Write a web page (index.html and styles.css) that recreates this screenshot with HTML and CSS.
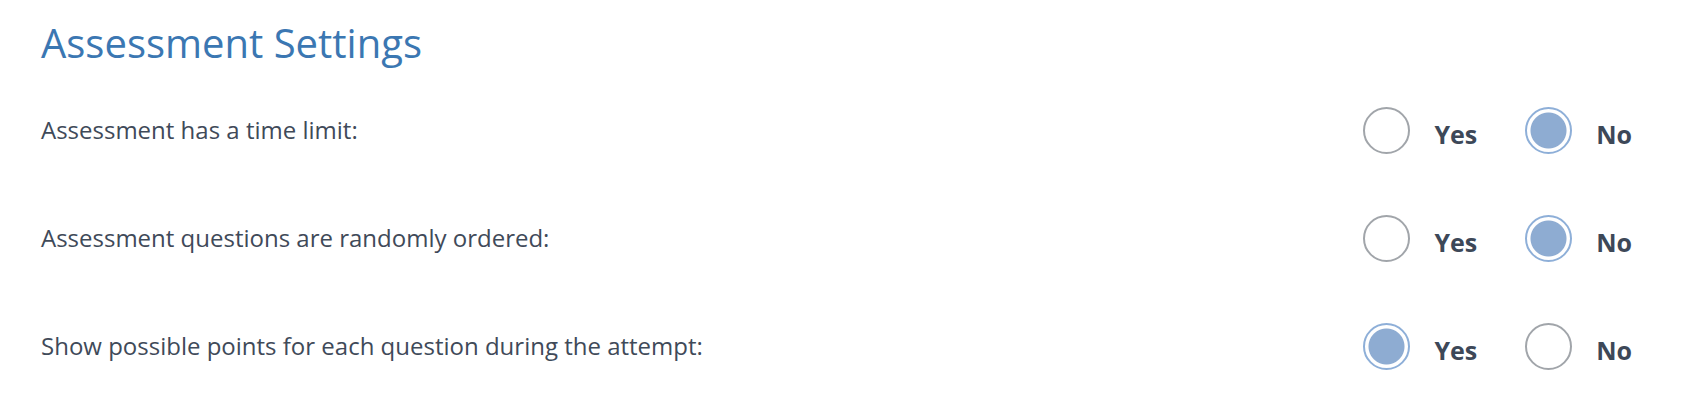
FILE: index.html
```html
<!DOCTYPE html>
<html lang="en">
<head>
    <meta charset="UTF-8">
    <meta name="viewport" content="width=device-width, initial-scale=1.0">
    <title>Assessment Settings</title>
    <link rel="stylesheet" href="styles.css">
</head>
<body>
    <div class="settings">
        <h1 class="settings-title">Assessment Settings</h1>

        <div class="setting-row">
            <span class="setting-label">Assessment has a time limit:</span>
            <div class="options">
                <label class="option">
                    <input type="radio" name="timeLimit" value="yes">
                    <span>Yes</span>
                </label>
                <label class="option">
                    <input type="radio" name="timeLimit" value="no" checked>
                    <span>No</span>
                </label>
            </div>
        </div>

        <div class="setting-row">
            <span class="setting-label">Assessment questions are randomly ordered:</span>
            <div class="options">
                <label class="option">
                    <input type="radio" name="randomOrder" value="yes">
                    <span>Yes</span>
                </label>
                <label class="option">
                    <input type="radio" name="randomOrder" value="no" checked>
                    <span>No</span>
                </label>
            </div>
        </div>

        <div class="setting-row">
            <span class="setting-label">Show possible points for each question during the attempt:</span>
            <div class="options">
                <label class="option">
                    <input type="radio" name="showPoints" value="yes" checked>
                    <span>Yes</span>
                </label>
                <label class="option">
                    <input type="radio" name="showPoints" value="no">
                    <span>No</span>
                </label>
            </div>
        </div>
    </div>
</body>
</html>
```

FILE: styles.css
```css
* {
    margin: 0;
    padding: 0;
    box-sizing: border-box;
    font-family: 'Open Sans', sans-serif;
}

body {
    background: #fff;
    color: #3f4a59;
}

.settings {
    padding: 20px 58px 0 41px;
}

.settings-title {
    font-size: 40px;
    font-weight: 400;
    line-height: 46px;
    color: #3b77b2;
}

.setting-row {
    height: 108px;
    display: flex;
    align-items: center;
    justify-content: space-between;
}

.settings-title + .setting-row {
    margin-top: 10px;
}

.setting-label {
    font-size: 24px;
    line-height: 32px;
}

.options {
    display: flex;
    align-items: center;
    gap: 48px;
}

.option {
    display: flex;
    align-items: center;
    gap: 24px;
    cursor: pointer;
}

.option span {
    font-size: 25px;
    font-weight: 700;
    line-height: 32px;
    padding-top: 8px;
    color: #3d4858;
}

.option input {
    appearance: none;
    -webkit-appearance: none;
    width: 47px;
    height: 47px;
    border-radius: 50%;
    border: 2px solid #a1a5aa;
    background: #fff;
    cursor: pointer;
}

.option input:checked {
    border-color: #8eafd8;
    background: radial-gradient(circle, #8eacd2 17.5px, #fff 18.5px);
}
```
